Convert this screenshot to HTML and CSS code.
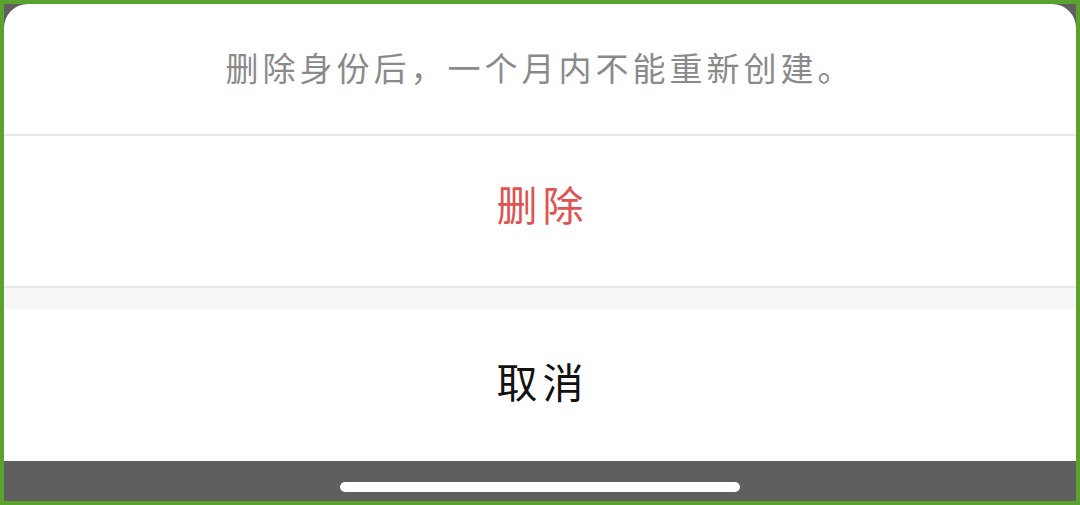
FILE: index.html
```html
<!DOCTYPE html>
<html lang="zh-CN">
<head>
<meta charset="utf-8">
<title>删除身份</title>
<link rel="stylesheet" href="styles.css">
</head>
<body>
<div class="screen">
  <div class="sheet">
    <div class="title">删除身份后，一个月内不能重新创建。</div>
    <div class="action danger">删除</div>
    <div class="gap"></div>
    <div class="action cancel">取消</div>
  </div>
  <div class="homebar"><div class="indicator"></div></div>
</div>
</body>
</html>
```

FILE: styles.css
```css
* { box-sizing: border-box; }
html, body { margin: 0; }
body {
  width: 1080px;
  height: 505px;
  padding: 4px;
  background: #5aa12e;
  font-family: "Noto Sans CJK SC", "Noto Sans", sans-serif;
}
.screen {
  height: 497px;
  background: #5f5f5f;
  display: flex;
  flex-direction: column;
}
.sheet {
  background: #ffffff;
  border-radius: 24px 24px 0 0;
  display: flex;
  flex-direction: column;
}
.title {
  height: 132px;
  border-bottom: 2px solid #e6e6e6;
  display: flex;
  align-items: center;
  justify-content: center;
  padding-bottom: 5px;
  padding-left: 0;
  font-size: 33px;
  letter-spacing: 4px;
  color: #8a8a8a;
}
.action {
  display: flex;
  align-items: center;
  justify-content: center;
  font-size: 41px;
  letter-spacing: 5px;
  padding-left: 5px;
}
.danger {
  height: 152px;
  border-bottom: 2px solid #e6e6e6;
  color: #e05352;
  padding-bottom: 16px;
}
.gap {
  height: 21px;
  background: #f6f6f6;
}
.cancel {
  height: 152px;
  color: #111111;
  padding-bottom: 10px;
}
.homebar {
  height: 40px;
  display: flex;
  justify-content: center;
  padding-top: 21px;
}
.indicator {
  width: 400px;
  height: 10px;
  border-radius: 5px;
  background: #ffffff;
}
```
